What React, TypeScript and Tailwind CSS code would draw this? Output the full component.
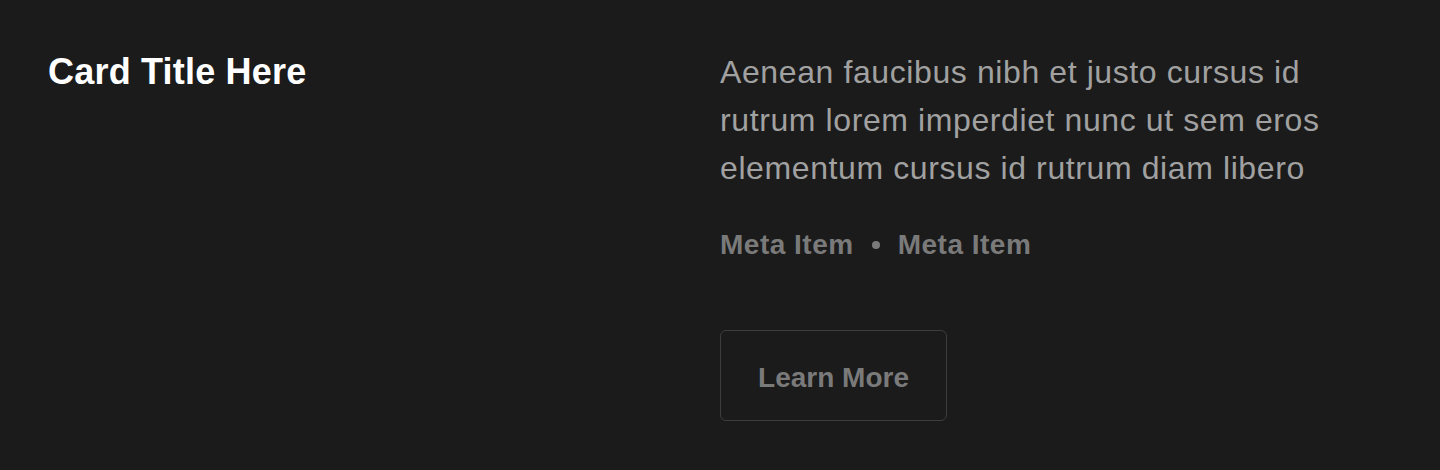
import React from "react";

export default function App() {
  return (
    <div
      className="min-h-[470px] w-full bg-[#1b1b1b] px-12 py-12"
      style={{ fontFamily: '"Liberation Sans", Arial, sans-serif' }}
    >
      <div className="grid grid-cols-2">
        <div>
          <h2 className="text-[36px] leading-[48px] font-bold tracking-[0.2px] text-white">Card Title Here</h2>
        </div>
        <div className="flex flex-col items-start">
          <p className="max-w-[630px] text-[32px] leading-[48px] tracking-[0.6px] text-[#a1a1a1]">
            Aenean faucibus nibh et justo cursus id rutrum lorem imperdiet nunc ut sem eros elementum cursus id rutrum diam libero
          </p>
          <div className="mt-8 flex items-center text-[28px] leading-[42px] font-bold tracking-[0.5px] text-[#7a7a7a]">
            <span>Meta Item</span>
            <span className="mx-[18px] h-2 w-2 rounded-full bg-[#7a7a7a]" />
            <span>Meta Item</span>
          </div>
          <button className="mt-16 flex h-[91px] w-[227px] items-center justify-center rounded-md border border-[#3d3d3d] pt-1 text-[28px] font-bold text-[#7a7a7a]">
            Learn More
          </button>
        </div>
      </div>
    </div>
  );
}
